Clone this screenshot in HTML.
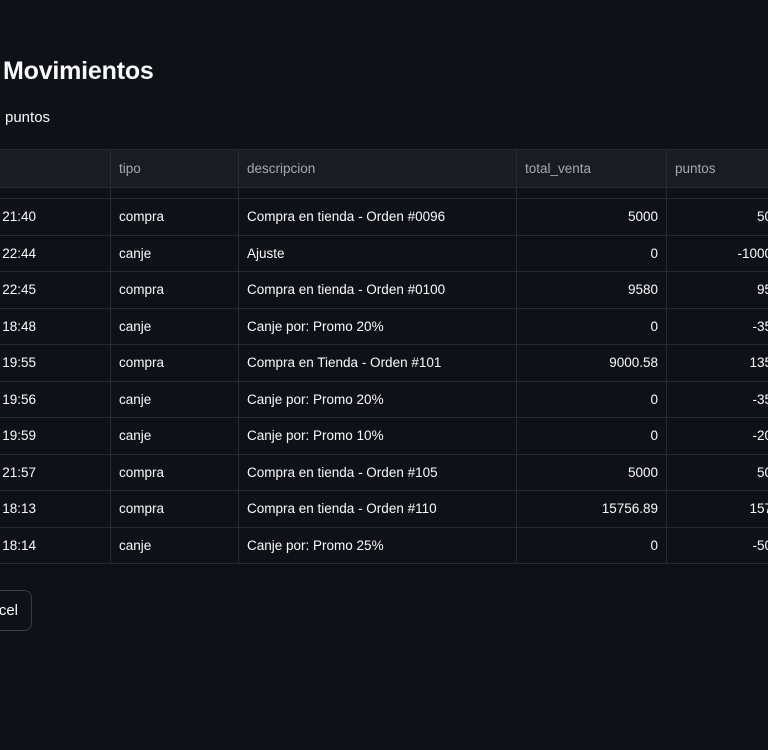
<!DOCTYPE html>
<html><head><style>
html,body{margin:0;width:768px;height:750px;overflow:hidden}
body{background:#0e1117;font-family:"Liberation Sans",sans-serif;color:#fafafa;position:relative}
.wrap{position:absolute;left:0;top:0;width:768px;height:750px;overflow:hidden}
h1{position:absolute;left:3px;top:57px;margin:0;font-size:25px;font-weight:bold;letter-spacing:-0.2px}
.sub{position:absolute;left:5px;top:109px;font-size:15px}
.tbl{position:absolute;left:-90px;top:149px;border-collapse:collapse;font-size:13.5px;table-layout:fixed;width:870px}
.tbl td,.tbl th{border:1px solid #262a33;padding:0 8px;white-space:nowrap;overflow:hidden}
.tbl th{background:#1a1c24;color:#a3a8b4;font-weight:normal;text-align:left;height:37px}
.tbl tr.gap td{height:10px}
.tbl td{height:35.5px;color:#fafafa}
.r{text-align:right}
.tbl td.d{padding-right:74px}
.btn{position:absolute;left:-40px;top:590px;width:72px;height:41px;border:1px solid #3a3d46;border-radius:8px;box-sizing:border-box;font-size:15px;line-height:39px;text-align:right;padding-right:13px}
</style></head><body><div class="wrap">
<h1>Movimientos</h1>
<div class="sub">puntos</div>
<table class="tbl">
<colgroup><col style="width:200px"><col style="width:128px"><col style="width:278px"><col style="width:150px"><col style="width:114px"></colgroup>
<tr><th></th><th>tipo</th><th>descripcion</th><th>total_venta</th><th>puntos</th></tr>
<tr class="gap"><td></td><td></td><td></td><td></td><td></td></tr>
<tr><td class="r d">2025-05-11 21:40</td><td>compra</td><td>Compra en tienda - Orden #0096</td><td class="r">5000</td><td class="r">50</td></tr>
<tr><td class="r d">2025-05-11 22:44</td><td>canje</td><td>Ajuste</td><td class="r">0</td><td class="r">-1000</td></tr>
<tr><td class="r d">2025-05-11 22:45</td><td>compra</td><td>Compra en tienda - Orden #0100</td><td class="r">9580</td><td class="r">95</td></tr>
<tr><td class="r d">2025-05-13 18:48</td><td>canje</td><td>Canje por: Promo 20%</td><td class="r">0</td><td class="r">-35</td></tr>
<tr><td class="r d">2025-05-15 19:55</td><td>compra</td><td>Compra en Tienda - Orden #101</td><td class="r">9000.58</td><td class="r">135</td></tr>
<tr><td class="r d">2025-05-15 19:56</td><td>canje</td><td>Canje por: Promo 20%</td><td class="r">0</td><td class="r">-35</td></tr>
<tr><td class="r d">2025-05-15 19:59</td><td>canje</td><td>Canje por: Promo 10%</td><td class="r">0</td><td class="r">-20</td></tr>
<tr><td class="r d">2025-05-15 21:57</td><td>compra</td><td>Compra en tienda - Orden #105</td><td class="r">5000</td><td class="r">50</td></tr>
<tr><td class="r d">2025-05-16 18:13</td><td>compra</td><td>Compra en tienda - Orden #110</td><td class="r">15756.89</td><td class="r">157</td></tr>
<tr><td class="r d">2025-05-16 18:14</td><td>canje</td><td>Canje por: Promo 25%</td><td class="r">0</td><td class="r">-50</td></tr>
</table>
<div class="btn">cel</div>
</div></body></html>
